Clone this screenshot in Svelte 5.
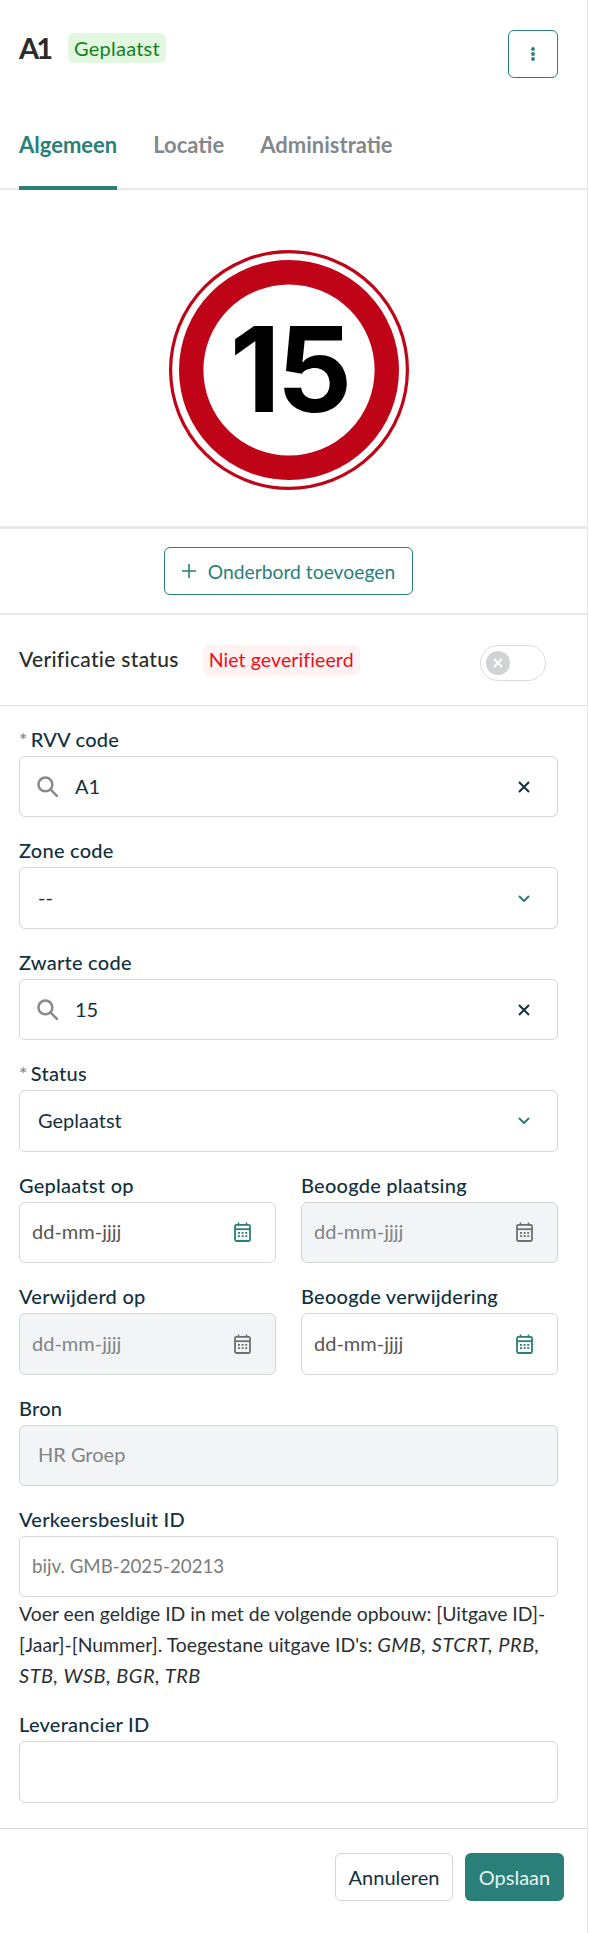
<script lang="ts">
  const tabs = ['Algemeen', 'Locatie', 'Administratie'];
</script>

{#snippet calendar()}
  <svg class="cal" viewBox="0 0 17 20" width="17" height="20" fill="none">
    <path d="M4.5 0.5v3M12.5 0.5v3" stroke="currentColor" stroke-width="1.6" />
    <rect x="1" y="2.8" width="15" height="16.2" rx="1.4" stroke="currentColor" stroke-width="1.8" />
    <path d="M1 7.2h15" stroke="currentColor" stroke-width="1.8" />
    <path d="M4 10.8h2M7.6 10.8h2M11.2 10.8h2M4 14.2h2M7.6 14.2h2M11.2 14.2h2" stroke="currentColor" stroke-width="1.7" />
  </svg>
{/snippet}

{#snippet search()}
  <svg class="search" viewBox="0 0 20 20" width="21" height="21" fill="none" stroke="#8a8a8a" stroke-width="2.4">
    <circle cx="8" cy="8" r="6.6" />
    <path d="M12.8 12.8l6.4 6.4" stroke-linecap="round" />
  </svg>
{/snippet}

{#snippet clear()}
  <svg class="clear" viewBox="0 0 12 12" width="12" height="12" fill="none" stroke="#12313f" stroke-width="2">
    <path d="M1 1l10 10M11 1L1 11" />
  </svg>
{/snippet}

{#snippet chevron()}
  <svg class="chevron" viewBox="0 0 12 7" width="12" height="7" fill="none" stroke="#2a7f78" stroke-width="2">
    <path d="M1 1l5 5 5-5" />
  </svg>
{/snippet}

<div class="page">
  <header class="head">
    <div class="title">
      <h1>A1</h1>
      <span class="badge green">Geplaatst</span>
    </div>
    <button class="menu" aria-label="Menu">
      <svg viewBox="0 0 4 14" width="4" height="14" fill="#2a7f78">
        <circle cx="2" cy="2" r="1.9" />
        <circle cx="2" cy="7" r="1.9" />
        <circle cx="2" cy="12" r="1.9" />
      </svg>
    </button>
  </header>

  <nav class="tabs">
    {#each tabs as tab, i}
      <span class="tab" class:active={i === 0}>{tab}</span>
    {/each}
  </nav>

  <div class="sign">
    <svg viewBox="0 0 240 240" width="240" height="240">
      <circle cx="120" cy="120" r="118.4" fill="none" stroke="#c00418" stroke-width="3.2" />
      <circle cx="120" cy="120" r="97.8" fill="#fff" stroke="#c00418" stroke-width="24.4" />
      <text x="120" y="162" text-anchor="middle" class="speed">15</text>
    </svg>
  </div>

  <div class="add">
    <button class="outline">
      <svg viewBox="0 0 14 14" width="14" height="14" stroke="#2a7f78" stroke-width="1.6"><path d="M7 0v14M0 7h14" /></svg>
      Onderbord toevoegen
    </button>
  </div>

  <div class="verify">
    <span class="verify-label">Verificatie status</span>
    <span class="badge red">Niet geverifieerd</span>
    <span class="switch">
      <span class="knob">
        <svg viewBox="0 0 10 10" width="10" height="10" stroke="#fff" stroke-width="2"><path d="M1 1l8 8M9 1L1 9" /></svg>
      </span>
    </span>
  </div>

  <form class="form">
    <div class="field">
      <span class="label"><i>*</i>RVV code</span>
      <div class="control">{@render search()}<span class="value with-icon">A1</span>{@render clear()}</div>
    </div>
    <div class="field">
      <span class="label">Zone code</span>
      <div class="control"><span class="value">--</span>{@render chevron()}</div>
    </div>
    <div class="field">
      <span class="label">Zwarte code</span>
      <div class="control">{@render search()}<span class="value with-icon">15</span>{@render clear()}</div>
    </div>
    <div class="field">
      <span class="label"><i>*</i>Status</span>
      <div class="control"><span class="value">Geplaatst</span>{@render chevron()}</div>
    </div>

    <div class="dates">
      <div class="field">
        <span class="label">Geplaatst op</span>
        <div class="control date"><span class="value">dd-mm-jjjj</span>{@render calendar()}</div>
      </div>
      <div class="field">
        <span class="label">Beoogde plaatsing</span>
        <div class="control date disabled"><span class="value">dd-mm-jjjj</span>{@render calendar()}</div>
      </div>
      <div class="field">
        <span class="label">Verwijderd op</span>
        <div class="control date disabled"><span class="value">dd-mm-jjjj</span>{@render calendar()}</div>
      </div>
      <div class="field">
        <span class="label">Beoogde verwijdering</span>
        <div class="control date"><span class="value">dd-mm-jjjj</span>{@render calendar()}</div>
      </div>
    </div>

    <div class="field">
      <span class="label">Bron</span>
      <div class="control disabled"><span class="value">HR Groep</span></div>
    </div>
    <div class="field">
      <span class="label">Verkeersbesluit ID</span>
      <div class="control"><span class="value placeholder">bijv. GMB-2025-20213</span></div>
      <p class="help">
        Voer een geldige ID in met de volgende opbouw: [Uitgave ID]-[Jaar]-[Nummer]. Toegestane uitgave ID's:
        <em>GMB, STCRT, PRB, STB, WSB, BGR, TRB</em>
      </p>
    </div>
    <div class="field">
      <span class="label">Leverancier ID</span>
      <div class="control"></div>
    </div>
  </form>

  <footer class="foot">
    <button class="cancel">Annuleren</button>
    <button class="save">Opslaan</button>
  </footer>
</div>

<style>
  :global(body) {
    margin: 0;
    background: #fff;
  }

  .page {
    width: 588px;
    min-height: 1933px;
    box-sizing: border-box;
    border-right: 1px solid #e5e9ee;
    font-family: Lato, 'Noto Sans', sans-serif;
    font-size: 20px;
    color: #12313f;
  }

  button {
    font: inherit;
    cursor: pointer;
  }

  .head {
    display: flex;
    justify-content: space-between;
    align-items: flex-start;
    padding: 30px 29px 0 19px;
  }

  .title {
    display: flex;
    align-items: center;
    gap: 18px;
    margin-top: 3px;
  }

  h1 {
    margin: 0;
    font-size: 29px;
    line-height: 30px;
    font-weight: 700;
    letter-spacing: -3px;
    color: #2b2b2b;
  }

  .badge {
    display: inline-block;
    height: 30px;
    line-height: 30px;
    padding: 0 6px;
    border-radius: 6px;
    white-space: nowrap;
  }

  .green {
    background: #e2f7e0;
    color: #12801c;
    letter-spacing: 0.25px;
  }

  .red {
    background: #fff2f2;
    color: #e8101c;
    font-size: 19.5px;
    letter-spacing: 0.1px;
  }

  .menu {
    width: 50px;
    height: 48px;
    display: flex;
    align-items: center;
    justify-content: center;
    padding: 0;
    background: #fff;
    border: 1px solid #2a7f78;
    border-radius: 6px;
  }

  .tabs {
    display: flex;
    gap: 36px;
    margin-top: 54px;
    padding-left: 19px;
    border-bottom: 2px solid #e5e9ee;
  }

  .tab {
    padding-bottom: 28px;
    border-bottom: 4px solid transparent;
    margin-bottom: -2px;
    font-size: 22px;
    line-height: 26px;
    font-weight: 700;
    color: #84888c;
  }

  .tab.active {
    color: #2a7f78;
    border-bottom-color: #2a7f78;
  }

  .sign {
    display: flex;
    justify-content: center;
    padding: 60px 29px 36px 19px;
    border-bottom: 3px solid #e5e9ee;
  }

  .sign svg {
    display: block;
  }

  .speed {
    font-family: Inter, sans-serif;
    font-weight: 700;
    font-size: 118px;
    letter-spacing: -4px;
    fill: #000;
  }

  .add {
    display: flex;
    justify-content: center;
    padding: 18px 29px 18px 19px;
    border-bottom: 2px solid #e5e9ee;
  }

  .outline {
    width: 249px;
    height: 48px;
    display: flex;
    align-items: center;
    justify-content: center;
    gap: 12px;
    background: #fff;
    border: 1px solid #2a7f78;
    border-radius: 6px;
    font-size: 19.3px;
    color: #2a7f78;
  }

  .verify {
    height: 91px;
    box-sizing: border-box;
    display: flex;
    align-items: flex-start;
    padding: 30px 41px 0 19px;
    border-bottom: 1px solid #dfe2e5;
  }

  .verify-label {
    font-size: 21px;
    letter-spacing: 0.3px;
    line-height: 28px;
    font-weight: 500;
    color: #2b2b2b;
    margin-right: 24px;
  }

  .switch {
    margin-left: auto;
    width: 66px;
    height: 36px;
    box-sizing: border-box;
    display: flex;
    align-items: center;
    padding-left: 5px;
    border: 1px solid #d9dbdd;
    border-radius: 18px;
  }

  .knob {
    width: 24px;
    height: 24px;
    display: flex;
    align-items: center;
    justify-content: center;
    border-radius: 50%;
    background: #d0d3d5;
  }

  .form {
    display: flex;
    flex-direction: column;
    gap: 20px;
    padding: 20px 29px 25px 19px;
    border-bottom: 1px solid #d9dbdd;
  }

  .dates {
    display: grid;
    grid-template-columns: 257px 257px;
    gap: 20px 25px;
  }

  .label {
    display: block;
    height: 26px;
    line-height: 26px;
    margin-bottom: 4px;
    font-weight: 500;
    letter-spacing: 0.25px;
    white-space: nowrap;
  }

  .label i {
    font-style: normal;
    color: #808a90;
    margin-right: 3px;
  }

  .control {
    height: 61.43px;
    box-sizing: border-box;
    display: flex;
    align-items: center;
    padding: 0 27px 0 18px;
    border: 1px solid #d3d5d7;
    border-radius: 6px;
    background: #fff;
  }

  .control.date {
    padding-right: 24px;
    padding-left: 12px;
    color: #5a574f;
  }

  .control.date .cal {
    color: #2a7f78;
  }

  .control.disabled {
    background: #f3f4f6;
    color: #808486;
  }

  .control.date.disabled .cal {
    color: #6c7073;
  }

  .value {
    flex: 1;
    white-space: nowrap;
    margin-top: -2px;
  }

  .search {
    margin-left: -1px;
  }

  .with-icon {
    margin-left: 17px;
  }

  .placeholder {
    color: #7c7c7c;
    margin-left: -6px;
    font-size: 18.7px;
  }

  .help {
    margin: 0;
    padding-top: 1px;
    font-size: 19.4px;
    line-height: 31px;
    color: #2b2f33;
  }

  .help em {
    font-size: 20px;
    letter-spacing: 0.5px;
  }

  .foot {
    display: flex;
    justify-content: flex-end;
    gap: 12px;
    padding: 24px 23px 0 0;
  }

  .cancel {
    width: 118px;
    height: 48px;
    padding: 0;
    background: #fff;
    border: 1px solid #d3d5d7;
    border-radius: 6px;
    color: #12313f;
  }

  .save {
    width: 99px;
    height: 48px;
    padding: 0;
    background: #2a7f78;
    border: none;
    border-radius: 6px;
    color: #e6f3f1;
  }
</style>
